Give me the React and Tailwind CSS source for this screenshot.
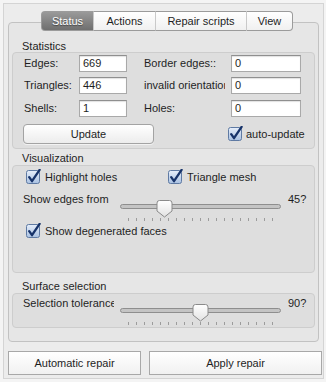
import React from 'react';

function CheckBox() {
  return (
    <svg width="16" height="16" viewBox="0 0 16 16" className="shrink-0">
      <defs>
        <linearGradient id="cbfill" x1="0" y1="0" x2="0" y2="1">
          <stop offset="0" stopColor="#e6eefa" />
          <stop offset="1" stopColor="#a9c1e2" />
        </linearGradient>
      </defs>
      <rect x="0.5" y="1.5" width="13" height="13" rx="2" fill="url(#cbfill)" stroke="#5f7aa3" />
      <path d="M3.2 8.2 L6 12.2 L13.6 0.8" stroke="#17336a" strokeWidth="2.3" fill="none" strokeLinecap="round" strokeLinejoin="round" />
    </svg>
  );
}

function Slider({ value }) {
  const cx = 8.5 + value * 144;
  const ticks = Array.from({ length: 19 }, (_, i) => 8.5 + i * 8);
  return (
    <svg width="161" height="22" viewBox="0 0 161 22" className="shrink-0">
      <defs>
        <linearGradient id="thumb" x1="0" y1="0" x2="0" y2="1">
          <stop offset="0" stopColor="#ffffff" />
          <stop offset="1" stopColor="#e2e2e2" />
        </linearGradient>
      </defs>
      <rect x="0.5" y="4.5" width="160" height="4" rx="2" fill="#c4c4c4" stroke="#8e8e8e" />
      {ticks.map((x) => (
        <line key={x} x1={x} y1="18" x2={x} y2="21" stroke="#9c9c9c" strokeWidth="1" />
      ))}
      <path
        d={`M${cx - 7.5} 3 Q${cx - 7.5} 0.5 ${cx - 5} 0.5 H${cx + 5} Q${cx + 7.5} 0.5 ${cx + 7.5} 3 V11 L${cx} 17 L${cx - 7.5} 11 Z`}
        fill="url(#thumb)"
        stroke="#8a8a8a"
      />
    </svg>
  );
}

function Field({ value, width }) {
  return (
    <div className={`${width} h-[17px] bg-white border border-[#a9a9a9] border-t-[#8f8f8f] pl-[3px] leading-[15px] shadow-[inset_0_1px_1px_rgba(0,0,0,0.12)]`}>
      {value}
    </div>
  );
}

function StatRow({ label1, value1, label2, value2, className }) {
  return (
    <div className={`flex items-center pl-[11px] ${className}`}>
      <div className="w-[55px]">{label1}</div>
      <Field value={value1} width="w-[48px]" />
      <div className="ml-[17px] w-[87px]">
        <div className="w-[81px] overflow-hidden whitespace-nowrap">{label2}</div>
      </div>
      <Field value={value2} width="w-[70px]" />
    </div>
  );
}

export default function App() {
  const tabs = [
    { name: 'Status', w: 'w-[52px]', active: true },
    { name: 'Actions', w: 'w-[62px]' },
    { name: 'Repair scripts', w: 'w-[91px]' },
    { name: 'View', w: 'w-[47px]' },
  ];

  return (
    <div className="w-[326px] h-[382px] bg-[#f4f4f4] pt-[3px] pl-[3px] font-['Liberation_Sans',Arial,sans-serif] text-[11px] text-[#1e1e1e]">
      <div className="w-[321px] h-[376px] border border-[#d4d4d4] bg-[#ececec] pt-[7px] pl-[4px]">
        {/* tabs */}
        <div className="relative z-10 flex ml-[33px] h-[20px]">
          {tabs.map((t, i) => (
            <div
              key={t.name}
              className={`${t.w} h-[20px] flex items-center justify-center border-y border-[#9b9b9b] ${
                i === 0 ? 'rounded-l-[4px] border-l' : 'border-l border-l-[#c9c9c9]'
              } ${i === tabs.length - 1 ? 'rounded-r-[4px] border-r' : ''} ${
                t.active
                  ? 'bg-gradient-to-b from-[#9a9a9a] to-[#6f6f6f] text-white border-[#6a6a6a] [text-shadow:0_1px_1px_rgba(0,0,0,0.45)]'
                  : 'bg-gradient-to-b from-[#ffffff] to-[#f0f0f0] text-[#1e1e1e]'
              }`}
            >
              {t.name}
            </div>
          ))}
        </div>

        {/* pane */}
        <div className="-mt-[9px] w-[311px] h-[320px] border border-[#c2c2c2] rounded-[4px] bg-[#e6e6e6] px-[3px] pt-[17px]">
          <div className="h-[12px] leading-[12px] pl-[10px]">Statistics</div>
          <div className="h-[97px] border border-[#cdcdcd] rounded-[4px] bg-[#dedede] pt-[2px]">
            <StatRow label1="Edges:" value1="669" label2="Border edges::" value2="0" />
            <StatRow label1="Triangles:" value1="446" label2="invalid orientation" value2="0" className="mt-[5px]" />
            <StatRow label1="Shells:" value1="1" label2="Holes:" value2="0" className="mt-[6px]" />
            <div className="flex items-center mt-[7px] pl-[10px]">
              <div className="w-[131px] h-[20px] flex items-center justify-center rounded-[4px] border border-[#a3a3a3] bg-gradient-to-b from-[#ffffff] to-[#ececec] shadow-[0_1px_0_rgba(255,255,255,0.6)]">
                Update
              </div>
              <div className="ml-[74px] flex items-center gap-[2px]">
                <CheckBox />
                <span>auto-update</span>
              </div>
            </div>
          </div>

          <div className="mt-[3px] h-[12px] leading-[12px] pl-[10px]">Visualization</div>
          <div className="mt-[1px] h-[108px] border border-[#cdcdcd] rounded-[4px] bg-[#dedede]">
            <div className="mt-[3px] h-[16px] flex items-center pl-[13px]">
              <div className="w-[142px] flex items-center gap-[3px]">
                <CheckBox />
                <span>Highlight holes</span>
              </div>
              <div className="flex items-center gap-[3px]">
                <CheckBox />
                <span>Triangle mesh</span>
              </div>
            </div>
            <div className="mt-[8px] flex items-start pl-[10px]">
              <div className="w-[97px] leading-[13px]">Show edges from</div>
              <div className="mt-[7px]">
                <Slider value={0.25} />
              </div>
              <div className="ml-[7px] leading-[13px]">45?</div>
            </div>
            <div className="mt-[1px] h-[16px] flex items-center gap-[3px] pl-[13px]">
              <CheckBox />
              <span>Show degenerated faces</span>
            </div>
          </div>

          <div className="mt-[7px] h-[12px] leading-[12px] pl-[10px]">Surface selection</div>
          <div className="mt-[1px] h-[35px] border border-[#cdcdcd] rounded-[4px] bg-[#dedede] pt-[3px]">
            <div className="flex items-start pl-[10px]">
              <div className="w-[97px] leading-[13px]">
                <div className="w-[91px] overflow-hidden whitespace-nowrap">Selection tolerance</div>
              </div>
              <div className="mt-[7px]">
                <Slider value={0.5} />
              </div>
              <div className="ml-[7px] leading-[13px]">90?</div>
            </div>
          </div>
        </div>

        {/* bottom buttons */}
        <div className="mt-[9px] flex gap-[8px]">
          <div className="w-[133px] h-[24px] flex items-center justify-center border border-[#a8a8a8] bg-gradient-to-b from-[#ffffff] to-[#f1f1f1]">
            Automatic repair
          </div>
          <div className="w-[173px] h-[24px] flex items-center justify-center border border-[#a8a8a8] bg-gradient-to-b from-[#ffffff] to-[#f1f1f1]">
            Apply repair
          </div>
        </div>
      </div>
    </div>
  );
}
